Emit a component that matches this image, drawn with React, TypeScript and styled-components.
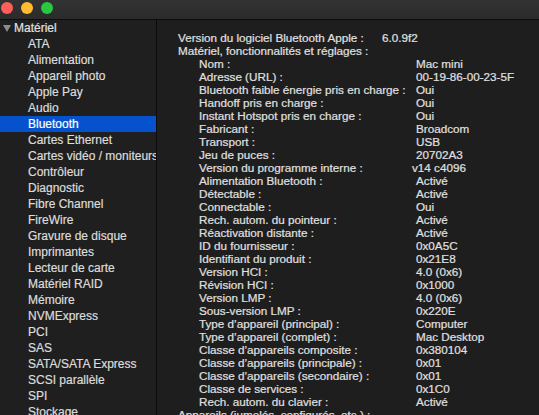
import styled, { createGlobalStyle } from "styled-components";

// #region CSS
const GlobalStyle = createGlobalStyle`
  html, body {
    margin: 0;
    padding: 0;
    background: #1e1e1e;
  }
  * {
    box-sizing: border-box;
  }
`;

const Window = styled.div`
  width: 539px;
  height: 415px;
  display: flex;
  flex-direction: column;
  overflow: hidden;
  background: #1e1e1e;
  font-family: "Liberation Sans", Arial, sans-serif;
  color: #e0e0e0;
  -webkit-text-stroke: 0.2px currentColor;
`;

const TitleBar = styled.div`
  height: 20px;
  flex-shrink: 0;
  display: flex;
  align-items: flex-start;
  gap: 8px;
  padding: 2px 0 0 1px;
  background: linear-gradient(#333333, #2b2b2b);
  border-bottom: 1px solid #0d0d0d;
`;

const Light = styled.span<{ $color: string }>`
  width: 12px;
  height: 12px;
  border-radius: 50%;
  background: ${(p) => p.$color};
`;

const Body = styled.div`
  flex: 1;
  display: flex;
  flex-direction: row;
  min-height: 0;
`;

const Sidebar = styled.div`
  width: 157px;
  flex-shrink: 0;
  border-right: 1px solid #0a0a0a;
  background: #1f1f1f;
  overflow: hidden;
  font-size: 12px;
`;

const GroupRow = styled.div`
  height: 16px;
  line-height: 16px;
  display: flex;
  align-items: center;
  padding-left: 3px;
  gap: 2px;
  white-space: nowrap;
`;

const Triangle = styled.span`
  width: 0;
  height: 0;
  border-left: 4px solid transparent;
  border-right: 4px solid transparent;
  border-top: 7px solid #8c8c8c;
  margin-right: 1px;
`;

const SideItem = styled.div<{ $selected?: boolean }>`
  height: 16px;
  line-height: 16px;
  padding-left: 28px;
  white-space: nowrap;
  background: ${(p) => (p.$selected ? "#0652cd" : "transparent")};
  color: ${(p) => (p.$selected ? "#ffffff" : "#dcdcdc")};
`;

const Content = styled.div`
  flex: 1;
  padding: 11px 0 0 21px;
  overflow: hidden;
  font-size: 11.7px;
`;

const InfoRow = styled.div<{ $indent: number; $labelWidth: number }>`
  height: 13px;
  line-height: 13px;
  display: grid;
  grid-template-columns: ${(p) => p.$labelWidth}px 1fr;
  padding-left: ${(p) => p.$indent}px;
  white-space: nowrap;
`;

const Label = styled.span`
  overflow: visible;
`;

const Value = styled.span<{ $nudge?: number }>`
  margin-left: ${(p) => p.$nudge ?? 0}px;
`;
// #endregion

const sideItems = [
  "ATA",
  "Alimentation",
  "Appareil photo",
  "Apple Pay",
  "Audio",
  "Bluetooth",
  "Cartes Ethernet",
  "Cartes vidéo / moniteurs",
  "Contrôleur",
  "Diagnostic",
  "Fibre Channel",
  "FireWire",
  "Gravure de disque",
  "Imprimantes",
  "Lecteur de carte",
  "Matériel RAID",
  "Mémoire",
  "NVMExpress",
  "PCI",
  "SAS",
  "SATA/SATA Express",
  "SCSI parallèle",
  "SPI",
  "Stockage",
];

type Info = { label: string; value?: string; nudge?: number };

const details: Info[] = [
  { label: "Nom :", value: "Mac mini" },
  { label: "Adresse (URL) :", value: "00-19-86-00-23-5F" },
  { label: "Bluetooth faible énergie pris en charge :", value: "Oui" },
  { label: "Handoff pris en charge :", value: "Oui" },
  { label: "Instant Hotspot pris en charge :", value: "Oui" },
  { label: "Fabricant :", value: "Broadcom" },
  { label: "Transport :", value: "USB" },
  { label: "Jeu de puces :", value: "20702A3" },
  { label: "Version du programme interne :", value: "v14 c4096", nudge: -4 },
  { label: "Alimentation Bluetooth :", value: "Activé" },
  { label: "Détectable :", value: "Activé" },
  { label: "Connectable :", value: "Oui" },
  { label: "Rech. autom. du pointeur :", value: "Activé" },
  { label: "Réactivation distante :", value: "Activé" },
  { label: "ID du fournisseur :", value: "0x0A5C" },
  { label: "Identifiant du produit :", value: "0x21E8" },
  { label: "Version HCI :", value: "4.0 (0x6)" },
  { label: "Révision HCI :", value: "0x1000" },
  { label: "Version LMP :", value: "4.0 (0x6)" },
  { label: "Sous-version LMP :", value: "0x220E" },
  { label: "Type d’appareil (principal) :", value: "Computer" },
  { label: "Type d’appareil (complet) :", value: "Mac Desktop" },
  { label: "Classe d’appareils composite :", value: "0x380104" },
  { label: "Classe d’appareils (principale) :", value: "0x01" },
  { label: "Classe d’appareils (secondaire) :", value: "0x01" },
  { label: "Classe de services :", value: "0x1C0" },
  { label: "Rech. autom. du clavier :", value: "Activé" },
];

export default function App() {
  return (
    <>
      <GlobalStyle />
      <Window>
        <TitleBar>
          <Light $color="#fe5f57" />
          <Light $color="#febc2e" />
          <Light $color="#28c840" />
        </TitleBar>
        <Body>
          <Sidebar>
            <GroupRow>
              <Triangle />
              Matériel
            </GroupRow>
            {sideItems.map((item) => (
              <SideItem key={item} $selected={item === "Bluetooth"}>
                {item}
              </SideItem>
            ))}
          </Sidebar>
          <Content>
            <InfoRow $indent={0} $labelWidth={204}>
              <Label>Version du logiciel Bluetooth Apple :</Label>
              <Value>6.0.9f2</Value>
            </InfoRow>
            <InfoRow $indent={0} $labelWidth={204}>
              <Label>Matériel, fonctionnalités et réglages :</Label>
            </InfoRow>
            {details.map((d) => (
              <InfoRow key={d.label} $indent={21} $labelWidth={217}>
                <Label>{d.label}</Label>
                <Value $nudge={d.nudge}>{d.value}</Value>
              </InfoRow>
            ))}
            <InfoRow $indent={0} $labelWidth={204}>
              <Label>Appareils (jumelés, configurés, etc.) :</Label>
            </InfoRow>
          </Content>
        </Body>
      </Window>
    </>
  );
}
